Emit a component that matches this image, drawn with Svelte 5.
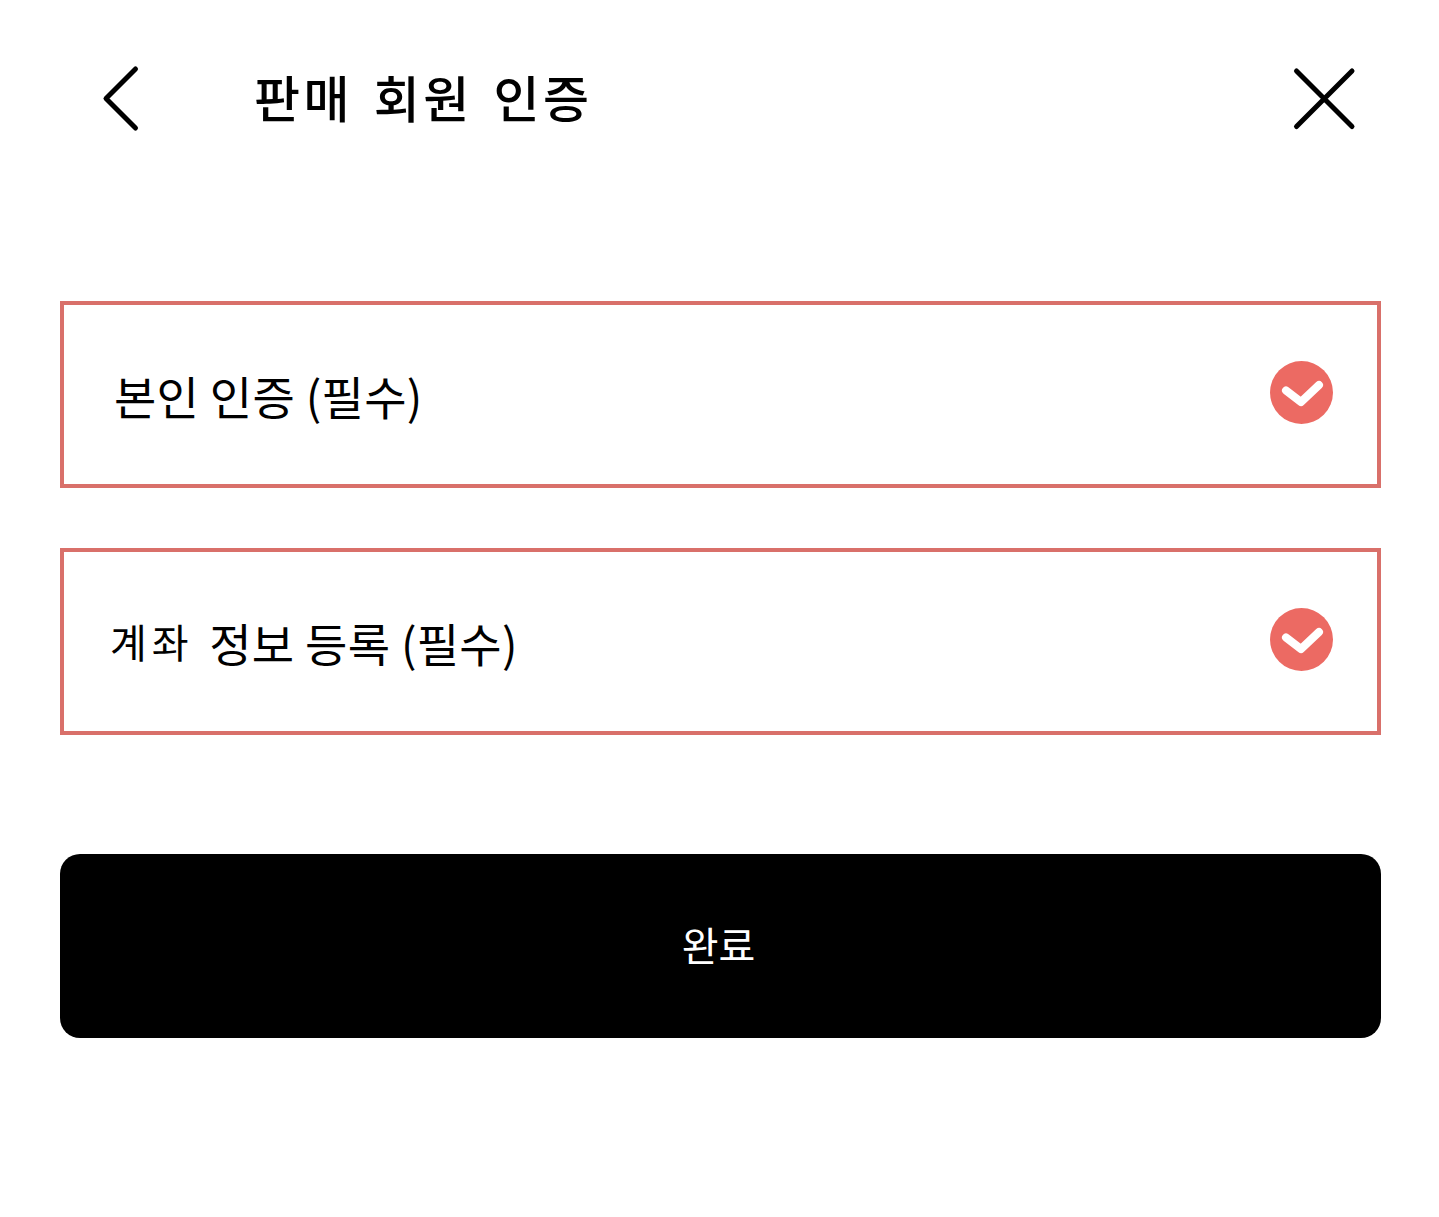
<script>
	const items = [
		{ prefix: '', label: '본인 인증 (필수)' },
		{ prefix: '계좌', label: ' 정보 등록 (필수)' }
	];
</script>

<div class="page">
	<header class="header">
		<button class="icon-btn back" aria-label="뒤로">
			<svg width="40" height="70" viewBox="0 0 40 70">
				<path d="M33.500 5 L4 34.500 L33.500 64" />
			</svg>
		</button>
		<h1>판매 회원 인증</h1>
		<button class="icon-btn close" aria-label="닫기">
			<svg width="64" height="64" viewBox="0 0 64 64">
				<path d="M4.500 4 L60 59.500 M60 4 L4.500 59.500" />
			</svg>
		</button>
	</header>

	<div class="list">
		{#each items as item}
			<div class="card">
				<span class="label"
					>{#if item.prefix}<span class="small">{item.prefix}</span>{/if}{item.label}</span
				>
				<span class="check">
					<svg width="63" height="63" viewBox="0 0 63 63">
						<circle cx="31.500" cy="31.500" r="31.500" fill="#ec6a63" />
						<path d="M16 29.500 L31 41 L49 24" />
					</svg>
				</span>
			</div>
		{/each}
	</div>

	<button class="submit">완료</button>
</div>

<style>
	:global(body) {
		background: #fff;
	}

	.page {
		box-sizing: border-box;
		height: 1217px;
		padding: 0 58px 0 60px;
		font-family: 'Noto Sans CJK KR', 'Noto Sans', sans-serif;
		color: #000;
	}

	.header {
		display: flex;
		align-items: center;
		height: 198px;
		padding: 0 25px 0 42px;
	}

	.icon-btn {
		display: flex;
		padding: 0;
		border: none;
		background: none;
	}

	.icon-btn path {
		fill: none;
		stroke: #000;
		stroke-width: 5;
		stroke-linecap: round;
		stroke-linejoin: round;
	}

	.back {
		margin-right: 112px;
	}

	h1 {
		flex: 1;
		margin: 0 0 6px;
		font-size: 50px;
		font-weight: 500;
		line-height: 1;
		letter-spacing: 3.500px;
		word-spacing: 6px;
	}

	.list {
		display: flex;
		flex-direction: column;
		gap: 60px;
		margin-top: 103px;
	}

	.card {
		box-sizing: border-box;
		display: flex;
		align-items: center;
		justify-content: space-between;
		height: 187px;
		padding: 0 44px 0 50px;
		border: 4px solid #d9706a;
	}

	.label {
		font-size: 46px;
		line-height: 1;
		letter-spacing: 0.300px;
	}

	.small {
		margin: 0 5px 0 -4px;
		font-size: 40px;
		letter-spacing: 5px;
		vertical-align: 4px;
	}

	.check {
		display: flex;
		margin-top: -4px;
	}

	.check path {
		fill: none;
		stroke: #fff;
		stroke-width: 8;
		stroke-linecap: round;
		stroke-linejoin: round;
	}

	.submit {
		display: block;
		width: 100%;
		height: 184px;
		margin-top: 119px;
		padding: 0 4px 4px 0;
		border: none;
		border-radius: 20px;
		background: #000;
		color: #fff;
		font-family: inherit;
		font-size: 40px;
	}
</style>
